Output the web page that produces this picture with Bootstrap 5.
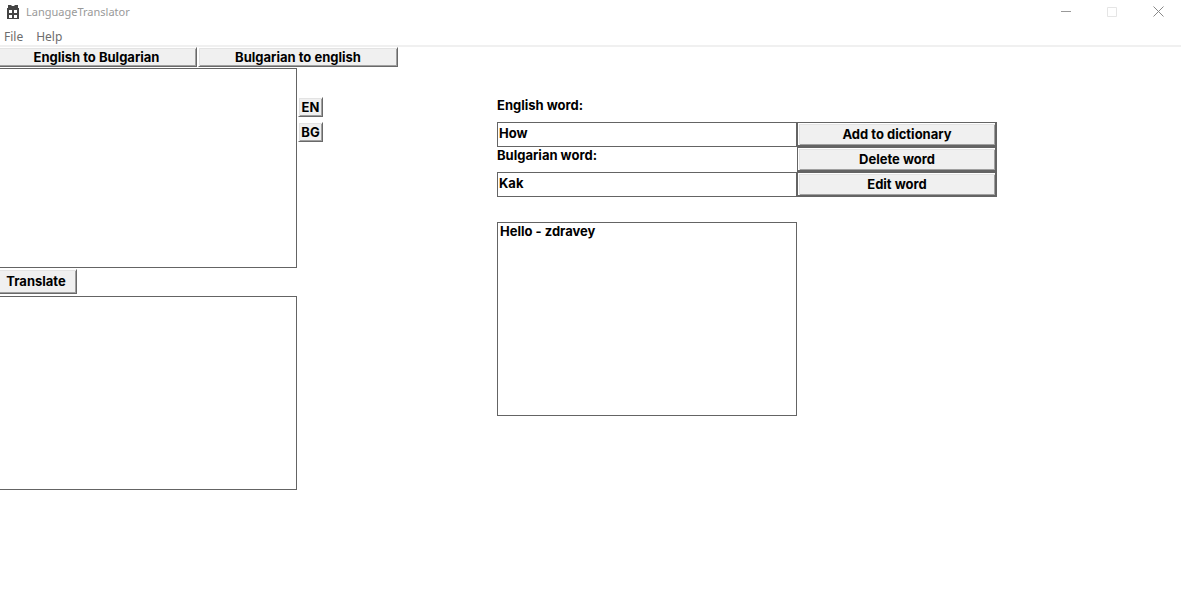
<!DOCTYPE html>
<html lang="en">
<head>
<meta charset="utf-8">
<meta name="viewport" content="width=device-width, initial-scale=1">
<title>LanguageTranslator</title>
<link href="https://cdn.jsdelivr.net/npm/bootstrap@5.3.0/dist/css/bootstrap.min.css" rel="stylesheet">
<style>
  body { background: #fff; color: #000; font: bold 13px/16px Inter, "Liberation Sans", Arial, sans-serif; }
  .titlebar { height: 23px; color: #999; padding-left: 6px; gap: 6px; font: 11px/16px "Noto Sans", "Segoe UI", sans-serif; }
  .titlebar h1 { font: inherit; }
  .caption-btn { width: 46px; height: 23px; background: none; border: 0; }
  .menubar { height: 24px; border-bottom: 2px solid #f0f0f0; padding: 6px 0 0 4px; gap: 13px; font: 12px/16px "Noto Sans", "Segoe UI", sans-serif; }
  .menubar a { color: #6d6d6d; text-decoration: none; }
  .bevel {
    background: #f0f0f0; color: #000; font: inherit; padding: 0 0 1px; border: 1px solid;
    border-color: #fff #696969 #696969 #fff; border-radius: 0;
    box-shadow: inset 1px 1px #e3e3e3, inset -1px -1px #a0a0a0;
  }
  .flush { border-left: 0; box-shadow: inset 0 1px #e3e3e3, inset -1px -1px #a0a0a0; }
  .mode-bar { height: 20px; gap: 1px; margin-bottom: 1px; }
  .mode-bar .bevel { width: 200px; }
  .mode-bar .flush { width: 197px; padding-right: 3px; }
  .field { background: #fff; color: #000; font: inherit; border: 1px solid #646464; border-radius: 0; outline: 0; resize: none; }
  .translate-col { width: 297px; }
  .translate-col .field { border-left: 0; }
  .source-box { height: 200px; }
  .result-box, .word-list { height: 194px; }
  .translate-btn { width: 77px; height: 25px; margin: 1px 0 2px; padding-right: 4px; }
  .lang-col { padding: 29px 0 0 1px; gap: 5px; }
  .lang-col .bevel { width: 25px; height: 20px; }
  .dictionary { margin: 29px 0 0 174px; }
  .word-form { width: 300px; }
  .word-form label { height: 25px; }
  .word-form .field { height: 25px; padding: 0 1px 4px; }
  .word-list { width: 300px; margin-top: 25px; }
  .word-list li { padding: 0 2px; }
  .actions { width: 200px; margin-top: 25px; }
  .framed { height: 25px; padding: 1px 2px 2px 1px; background: #646464; }
  .framed .bevel { border-right: 0; border-bottom: 0; }
</style>
</head>
<body>
<header>
  <div class="titlebar d-flex align-items-center">
    <svg width="14" height="16" viewBox="0 0 14 16" fill="#444" aria-hidden="true"><path d="M2 1h3l1 1h2l1-1h3v3h1v11H1V4h1z"/><path fill="#fff" d="M3 6h3v3H3zM8 6h3v3H8zM3 11h3v3H3zM8 11h3v3H8z"/></svg>
    <h1 class="mb-0 me-auto">LanguageTranslator</h1>
    <div class="d-flex">
      <button class="caption-btn d-flex align-items-center justify-content-center p-0" type="button" aria-label="Minimize"><svg width="10" height="11"><path d="M0 5.5h10" stroke="#999"/></svg></button>
      <button class="caption-btn d-flex align-items-center justify-content-center p-0" type="button" aria-label="Maximize" disabled><svg width="10" height="10"><path d="M.5.5h9v9h-9z" fill="none" stroke="#e5e5e5"/></svg></button>
      <button class="caption-btn d-flex align-items-center justify-content-center p-0" type="button" aria-label="Close"><svg width="11" height="11"><path d="M.5.5l10 10M10.5.5l-10 10" stroke="#888"/></svg></button>
    </div>
  </div>
  <nav class="menubar d-flex align-items-center" aria-label="Application menu">
    <a href="#">File</a>
    <a href="#">Help</a>
  </nav>
</header>
<main>
  <div class="mode-bar d-flex">
    <button class="bevel flush" type="button">English to Bulgarian</button>
    <button class="bevel" type="button">Bulgarian to english</button>
  </div>
  <div class="d-flex align-items-start">
    <section class="translate-col d-flex flex-column align-items-start flex-shrink-0">
      <textarea class="field source-box w-100" aria-label="Text to translate"></textarea>
      <button class="bevel flush translate-btn" type="button">Translate</button>
      <textarea class="field result-box w-100" aria-label="Translation" readonly></textarea>
    </section>
    <div class="lang-col d-flex flex-column">
      <button class="bevel" type="button">EN</button>
      <button class="bevel" type="button">BG</button>
    </div>
    <section class="dictionary d-flex align-items-start">
      <div>
        <form class="word-form d-flex flex-column">
          <label for="english">English word:</label>
          <input class="field" id="english" type="text" value="How">
          <label for="bulgarian">Bulgarian word:</label>
          <input class="field" id="bulgarian" type="text" value="Kak">
        </form>
        <ul class="field word-list list-unstyled mb-0" aria-label="Dictionary">
          <li>Hello - zdravey</li>
        </ul>
      </div>
      <div class="actions d-flex flex-column">
        <div class="framed d-flex"><button class="bevel w-100" type="button">Add to dictionary</button></div>
        <div class="framed d-flex"><button class="bevel w-100" type="button">Delete word</button></div>
        <div class="framed d-flex"><button class="bevel w-100" type="button">Edit word</button></div>
      </div>
    </section>
  </div>
</main>
<script src="https://cdn.jsdelivr.net/npm/bootstrap@5.3.0/dist/js/bootstrap.bundle.min.js"></script>
</body>
</html>
